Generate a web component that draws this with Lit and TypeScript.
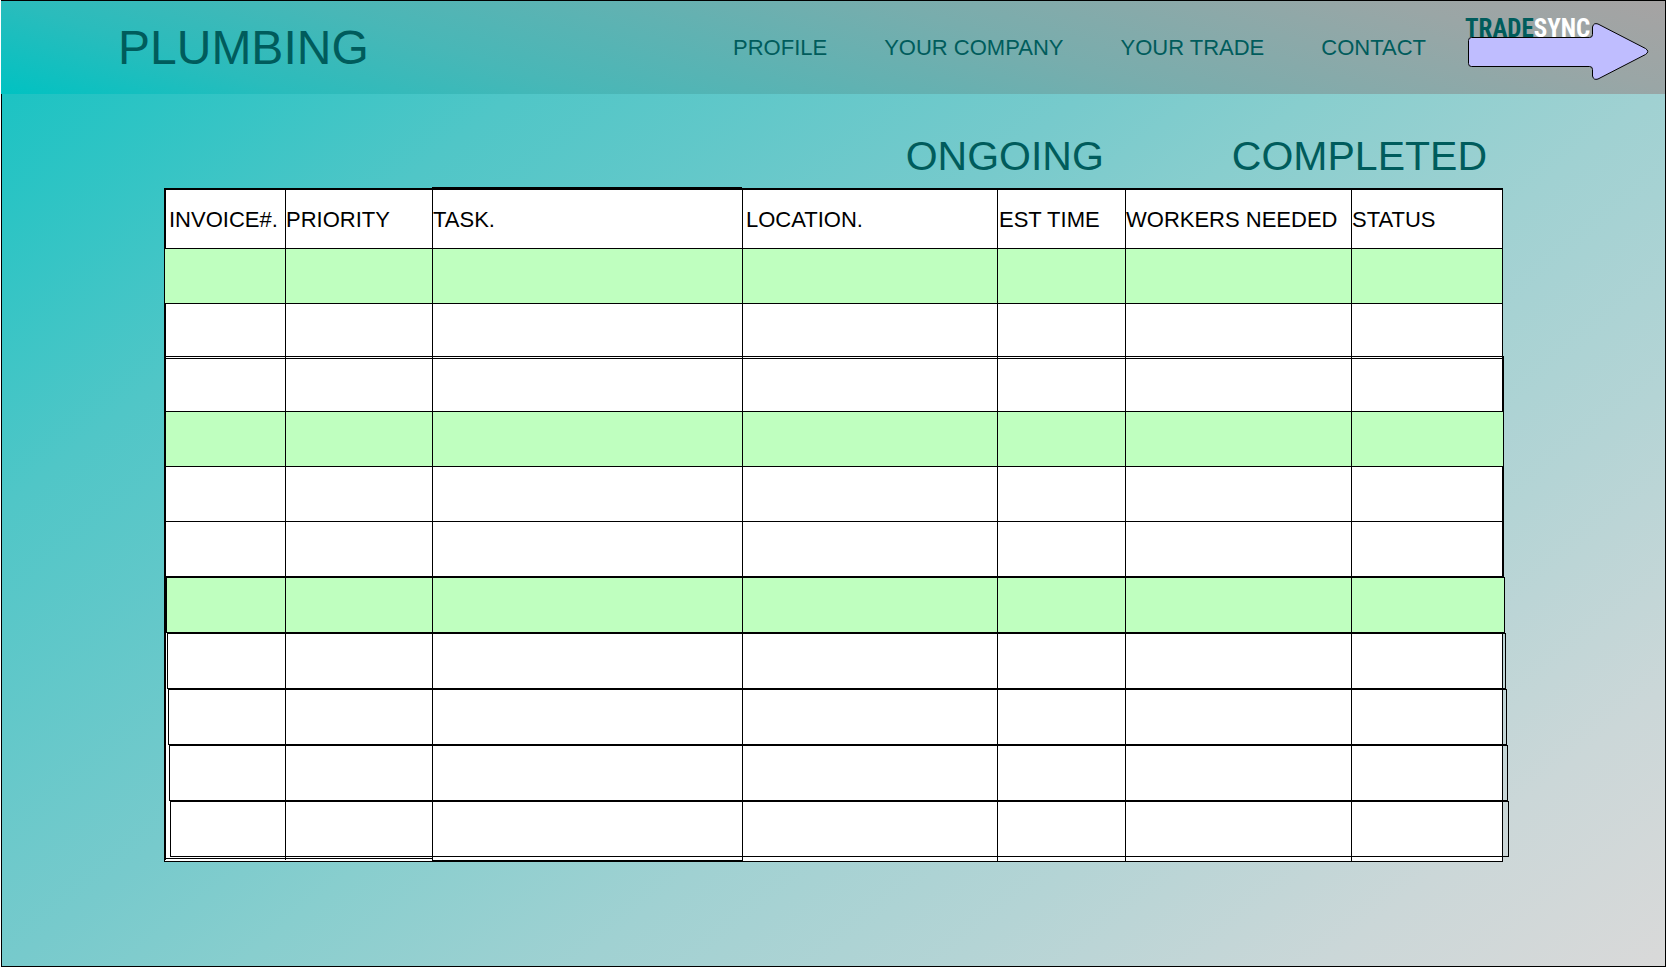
import { LitElement, html, css } from "lit";
import { customElement } from "lit/decorators.js";
import { classMap } from "lit/directives/class-map.js";

@customElement("trade-logo")
class TradeLogo extends LitElement {
  static styles = css`
    :host { display: block; position: relative; }
    .arrow { display: block; width: 184px; height: 72px; }
    .name {
      position: absolute; left: 0; bottom: 38px;
      color: #005c5c; white-space: nowrap;
      font: 700 25px/30px "DIN Condensed", "Roboto Condensed", "Liberation Sans Narrow", "Liberation Sans", sans-serif;
    }
    .light { color: #fff; }
  `;
  render() {
    return html`
      <svg class="arrow" viewBox="0 0 184 72" aria-hidden="true">
        <path d="M6.500 27.500H124.500Q127.500 27.500 127.500 24.500V17Q128.500 12.500 133 14L180.500 38.500Q185 41.500 180.500 44.500L133 69Q128.500 70.500 127.500 66V59.500Q127.500 56.500 124.500 56.500H6.500Q3.500 56.500 3.500 53.500V30.500Q3.500 27.500 6.500 27.500Z" fill="#bfbdff" stroke="#000"/>
      </svg>
      <span class="name">TRADE<span class="light">SYNC</span></span>
    `;
  }
}

type Row = { fill?: boolean; shift: number; kind: string };

const ROWS: Row[] = [
  { fill: true, shift: 0, kind: "first" },
  { shift: 0, kind: "short" },
  { shift: 1, kind: "" },
  { fill: true, shift: 1, kind: "" },
  { shift: 1, kind: "" },
  { shift: 1, kind: "" },
  { fill: true, shift: 2, kind: "heavy" },
  { shift: 3, kind: "heavy" },
  { shift: 4, kind: "heavy" },
  { shift: 5, kind: "heavy" },
  { shift: 6, kind: "heavy" },
];

const COLUMNS = [
  { name: "invoice", label: "INVOICE#." },
  { name: "priority", label: "PRIORITY" },
  { name: "task", label: "TASK." },
  { name: "location", label: "LOCATION." },
  { name: "time", label: "EST TIME" },
  { name: "workers", label: "WORKERS NEEDED" },
  { name: "status", label: "STATUS" },
];

@customElement("job-table")
class JobTable extends LitElement {
  static styles = css`
    :host { display: block; }
    table {
      width: 100%; box-sizing: border-box; table-layout: fixed;
      border-collapse: separate; border-spacing: 0;
      border: solid #000; border-width: 2px 1px 0 1px;
      background: #fff; color: #000; font-size: 22px; line-height: 26px;
    }
    col.invoice { width: 120px; }
    col.priority { width: 147px; }
    col.location { width: 255px; }
    col.time { width: 128px; }
    col.workers { width: 226px; }
    col.status { width: 151px; }
    th, td { box-sizing: border-box; padding: 0; border-left: 1px solid #000; }
    th { height: 58px; padding-top: 2px; text-align: left; font-weight: 400; white-space: nowrap; }
    th.invoice, th.location { padding-left: 3px; }
    th.time { padding-left: 1px; }
    th.task { box-shadow: 0 -3px 0 #000; }
    tbody tr { position: relative; z-index: 0; }
    tbody td { height: 55px; }
    .short td { height: 53px; }
    .heavy td { height: 56px; }
    .first td:first-child { border-left: 0; }
    /* Each row's frame is drawn under its column lines and drifts right by --shift. */
    tbody td:first-child::before {
      content: ""; position: absolute; z-index: -1; box-sizing: border-box;
      top: 0; bottom: -1px;
      left: calc(var(--shift) - 1px); right: calc(-1px - var(--shift));
      border: 1px solid #000;
    }
    .fill td:first-child::before { background: #bfffbf; }
    .short td:first-child::before { bottom: -3px; }
    .heavy td:first-child::before { top: 1px; }
    tfoot td { height: 6px; border-bottom: 1px solid #000; }
    tfoot .invoice, tfoot .priority { border-bottom: 4px double #000; }
    tfoot .task { border-bottom-width: 2px; }
  `;
  render() {
    return html`
      <table aria-label="Plumbing jobs">
        <colgroup>${COLUMNS.map((c) => html`<col class=${c.name} />`)}</colgroup>
        <thead><tr>${COLUMNS.map((c) => html`<th scope="col" class=${c.name}>${c.label}</th>`)}</tr></thead>
        <tbody>
          ${ROWS.map((r) => html`
            <tr class=${classMap({ fill: !!r.fill, first: r.kind === "first", short: r.kind === "short", heavy: r.kind === "heavy" })}
                style="--shift:${r.shift}px">
              ${COLUMNS.map(() => html`<td></td>`)}
            </tr>`)}
        </tbody>
        <tfoot aria-hidden="true"><tr>${COLUMNS.map((c) => html`<td class=${c.name}></td>`)}</tr></tfoot>
      </table>
    `;
  }
}

@customElement("app-root")
class AppRoot extends LitElement {
  static styles = css`
    :host {
      display: block; box-sizing: border-box; min-height: 100vh; margin-left: 1px;
      border: 1px solid #000;
      background: linear-gradient(141deg, #0fc1c1 0%, #1cc3c3 4%, #50c6c7 22%, #77cacc 42%, #88cece 50%, #a0d1d2 62%, #b4d4d5 75%, #cbd7d8 88%, #d9d9d9 100%);
      font-family: "Liberation Sans", Arial, sans-serif; color: #005c5c;
    }
    header {
      display: flex; align-items: center; height: 93px; padding: 0 16px 0 117px; margin-left: -1px;
      background: linear-gradient(18deg, #00c2c2 0%, #2abcbc 15%, #48b7b7 30%, #78adad 60%, #9aa6a6 86%, #a6a3a3 100%);
    }
    h1 { margin: 0; font-size: 48px; line-height: 56px; font-weight: 400; }
    nav { display: flex; gap: 57px; margin-left: auto; margin-right: 39px; font-size: 22px; line-height: 26px; }
    trade-logo { align-self: flex-start; margin-top: 9px; }
    a { color: inherit; text-decoration: none; white-space: nowrap; }
    main { padding: 38px 162px 0 162px; }
    .tabs { display: flex; justify-content: flex-end; gap: 128px; padding-right: 16px; margin-bottom: 8px; }
    button { border: 0; padding: 0; background: none; color: inherit; font: 41px/48px "Liberation Sans", Arial, sans-serif; cursor: pointer; }
  `;
  render() {
    return html`
      <header>
        <h1>PLUMBING</h1>
        <nav>
          <a href="#profile">PROFILE</a>
          <a href="#company">YOUR COMPANY</a>
          <a href="#trade">YOUR TRADE</a>
          <a href="#contact">CONTACT</a>
        </nav>
        <trade-logo></trade-logo>
      </header>
      <main>
        <div class="tabs">
          <button type="button">ONGOING</button>
          <button type="button">COMPLETED</button>
        </div>
        <job-table></job-table>
      </main>
    `;
  }
}
